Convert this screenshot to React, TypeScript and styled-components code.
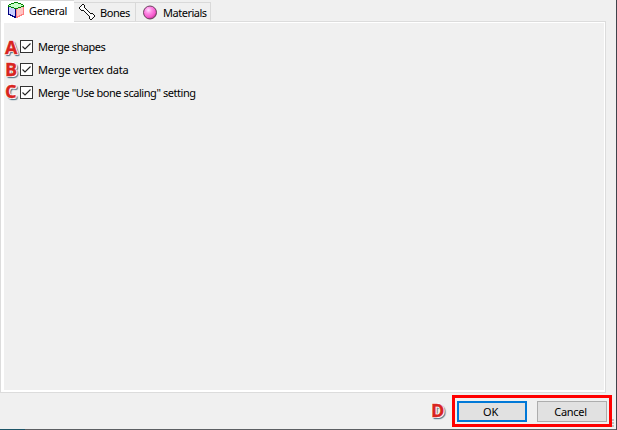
import React from "react";
import styled, { createGlobalStyle } from "styled-components";

const GlobalStyle = createGlobalStyle`
  * { box-sizing: border-box; }
  body { margin: 0; overflow: hidden; }
`;

const Dialog = styled.main`
  width: 617px;
  height: 430px;
  display: flex;
  flex-direction: column;
  background: linear-gradient(90deg, #1d5568 25px, #5c5f63 25px) 0 100% / 100% 1px no-repeat, #f0f0f0;
  border-right: 1px solid #3f434b;
  font-family: "Noto Sans", "Open Sans", sans-serif;
  font-size: 11px;
  color: #000;
`;

const TabBar = styled.div`
  height: 21px;
  display: flex;
  align-items: flex-end;
`;

const Tab = styled.div<{ $width: number; $gap: number; $left: number; $active?: boolean }>`
  position: relative;
  z-index: ${(p) => (p.$active ? 1 : 0)};
  width: ${(p) => p.$width}px;
  height: ${(p) => (p.$active ? 22 : 19)}px;
  margin-bottom: ${(p) => (p.$active ? -1 : 0)}px;
  display: flex;
  align-items: flex-start;
  gap: ${(p) => p.$gap}px;
  padding: 1px 0 0 ${(p) => p.$left}px;
  background: ${(p) => (p.$active ? "#fff" : "#f0f0f0")};
  border: solid #d9d9d9;
  border-width: ${(p) => (p.$active ? "1px 0 0 1px" : "1px 1px 0 0")};

  svg { flex: none; }
`;

const Label = styled.span<{ $spacing?: number; $drop?: number }>`
  line-height: 15px;
  white-space: nowrap;
  letter-spacing: ${(p) => p.$spacing ?? 0}px;
  margin-top: ${(p) => p.$drop ?? 0}px;
`;

const Page = styled.section`
  width: 606px;
  height: 372px;
  border: 1px solid #dcdcdc;
  background: #f0f0f0;
  box-shadow: inset 3px 1px #fff, inset -1px -2px #fff;
  padding: 13px 0 0 4px;
`;

const OptionRow = styled.label`
  height: 23px;
  display: flex;
  align-items: center;
`;

const Check = styled.svg`
  display: block;
  width: 13px;
  height: 13px;
  margin-right: 5px;
`;

const Marker = styled.span<{ $width: number; $lift?: number }>`
  width: ${(p) => p.$width}px;
  flex: none;
  margin-bottom: ${(p) => (p.$lift ?? 0) * 2}px;
  font: bold 18px/20px "Open Sans", "Noto Sans", sans-serif;
  color: #d8251f;
  -webkit-text-stroke: 0.4px #d8251f;
  text-shadow: -1px 0 #fff, 0 -1px #fff, 1px 0 #fff, 0 1px #fff, 1px 1px #fff, 2px 1px 1px #5f7f90, 1px 2px 1px #5f7f90, 2px 2px 1px #5f7f90;
`;

const Footer = styled.footer`
  height: 36px;
  display: flex;
  align-items: flex-start;
  justify-content: flex-end;
  padding: 2px 4px 0 0;
`;

const FooterMarker = styled(Marker)`
  margin-top: 5px;
`;

const ButtonFrame = styled.div`
  width: 160px;
  height: 32px;
  display: flex;
  justify-content: space-between;
  padding: 3px 2px;
  border: 3px solid #f00;
`;

const Button = styled.button<{ $primary?: boolean }>`
  width: 70px;
  height: 21px;
  padding: 0 3px 1px 0;
  border: ${(p) => (p.$primary ? "2px solid #0078d7" : "1px solid #adadad")};
  background: #e1e1e1;
  color: #000;
  font: inherit;
  letter-spacing: -0.3px;
  display: flex;
  align-items: center;
  justify-content: center;
`;

const Grip = styled.svg`
  position: absolute;
  left: 612px;
  top: 419px;
`;

const CubeIcon = () => (
  <svg width="16" height="16" viewBox="0 0 16 16" shapeRendering="crispEdges">
    <path d="M0 4L8 7V16L0 12Z" fill="#c8ceff" />
    <path d="M8 7L16 4V12L8 16Z" fill="#ffc4c4" />
    <path d="M0 3L7 0L16 3L9 7Z" fill="#c8ffc8" />
    <path d="M.5 4V12L7.5 15.5V7" fill="none" stroke="#000080" />
    <path d="M8.5 7V15.5L15.5 12V4" fill="none" stroke="#ff8080" />
    <path
      d="M6 0h4v1h-4zM3 1h3v1h-3zM10 1h3v1h-3zM1 2h2v1h-2zM13 2h2v1h-2zM0 3h1v2h-1zM15 3h1v2h-1zM1 4h2v1h-2zM13 4h2v1h-2zM3 5h3v1h-3zM10 5h3v1h-3zM6 6h4v1h-4z"
      fill="#008000"
    />
  </svg>
);

const BoneIcon = () => (
  <svg width="16" height="16" viewBox="0 0 16 16" shapeRendering="crispEdges">
    <path d="M3 1h2v3l7 7h3v2h-2v2h-2v-3L4 5H1V3h2z" fill="#fff" />
    <path
      d="M3 0h2v1h-2zM2 1h1v1h-1zM5 1h1v3h-1zM1 2h1v1h-1zM0 3h1v2h-1zM1 5h1v1h-1zM2 6h2v1h-2zM6 4h1v1h-1zM7 5h1v1h-1zM8 6h1v1h-1zM9 7h1v1h-1zM10 8h1v1h-1zM11 9h3v1h-3zM14 10h1v1h-1zM15 11h1v2h-1zM14 13h1v1h-1zM13 14h1v1h-1zM11 15h2v1h-2zM10 12h1v3h-1zM9 11h1v1h-1zM8 10h1v1h-1zM7 9h1v1h-1zM6 8h1v1h-1zM4 6h1v1h-1zM5 7h1v1h-1z"
      fill="#111"
    />
  </svg>
);

const SphereIcon = () => (
  <svg width="14" height="16" viewBox="0 -1.5 14 16">
    <defs>
      <radialGradient id="sphere" cx=".38" cy=".32" r=".72">
        <stop offset="0" stopColor="#ffdcff" />
        <stop offset=".35" stopColor="#ff8ce6" />
        <stop offset=".75" stopColor="#f558cc" />
        <stop offset="1" stopColor="#a8307f" />
      </radialGradient>
    </defs>
    <circle cx="7" cy="7" r="6.5" fill="url(#sphere)" stroke="#5c3450" strokeWidth=".9" />
  </svg>
);

const options = [
  { mark: "A", text: "Merge shapes", spacing: -0.46, lift: 0 },
  { mark: "B", text: "Merge vertex data", spacing: -0.24, lift: 1 },
  { mark: "C", text: 'Merge "Use bone scaling" setting', spacing: -0.44, lift: 2 },
];

export default function App() {
  return (
    <>
      <GlobalStyle />
      <Dialog>
        <TabBar>
          <Tab $width={74} $gap={5} $left={7} $active>
            <CubeIcon />
            <Label $spacing={-0.38} $drop={1}>General</Label>
          </Tab>
          <Tab $width={62} $gap={5} $left={5}>
            <BoneIcon />
            <Label $spacing={-0.45} $drop={1}>Bones</Label>
          </Tab>
          <Tab $width={75} $gap={6} $left={7}>
            <SphereIcon />
            <Label $spacing={-0.48} $drop={1}>Materials</Label>
          </Tab>
        </TabBar>
        <Page>
          {options.map((o) => (
            <OptionRow key={o.mark}>
              <Marker $width={15} $lift={o.lift}>{o.mark}</Marker>
              <Check viewBox="0 0 13 13">
                <rect x=".5" y=".5" width="12" height="12" fill="#fff" stroke="#333" />
                <path d="M2.5 6.5L5 9L10.5 3.5" fill="none" stroke="#222" strokeWidth="1.1" />
              </Check>
              <Label $spacing={o.spacing}>{o.text}</Label>
            </OptionRow>
          ))}
        </Page>
        <Footer>
          <FooterMarker $width={21}>D</FooterMarker>
          <ButtonFrame>
            <Button $primary>OK</Button>
            <Button>Cancel</Button>
          </ButtonFrame>
        </Footer>
        <Grip width="3" height="9" viewBox="0 0 3 9" shapeRendering="crispEdges">
          <path d="M0 0h2v2H0zM0 3h2v2H0zM0 6h2v2H0z" fill="#bfbfbf" />
        </Grip>
      </Dialog>
    </>
  );
}
